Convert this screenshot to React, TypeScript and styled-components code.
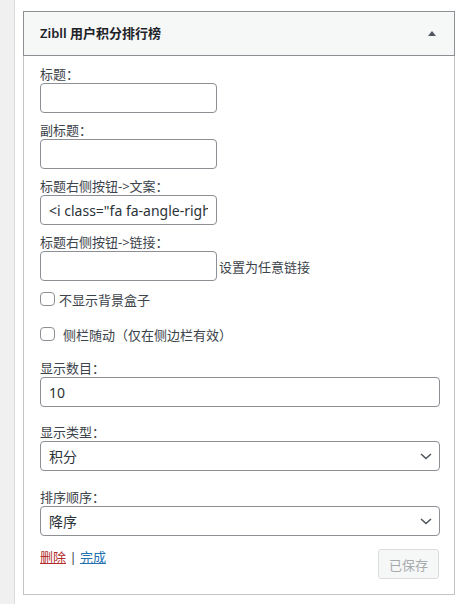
import React from 'react'
import styled, { createGlobalStyle } from 'styled-components'

const GlobalStyle = createGlobalStyle`
  html, body {
    margin: 0;
    padding: 0;
    background: #fff;
  }
  body {
    font-family: "Noto Sans", "Noto Sans CJK SC", sans-serif;
    font-size: 13px;
    color: #3c434a;
  }
  * { box-sizing: border-box; }
`

const Page = styled.div`
  display: flex;
  min-height: 604px;
  background: #f0f0f1;
  padding-left: 14px;
`

const Panel = styled.div`
  flex: 1;
  background: #fff;
  border-left: 1px solid #dcdcde;
  padding: 11px 4px 9px 8px;
`

const WidgetTop = styled.div`
  display: flex;
  align-items: center;
  justify-content: space-between;
  height: 45px;
  padding: 0 18px 0 16px;
  background: #f6f7f7;
  border: 1px solid #8c8f94;
`

const WidgetTitle = styled.h3`
  margin: 0;
  font-size: 13px;
  font-weight: 600;
  color: #1d2327;
  line-height: 1;
`

const WidgetInside = styled.div`
  display: flex;
  flex-direction: column;
  padding: 10px 14px 15px 16px;
  border: 1px solid #c3c4c7;
  border-top: none;
`

const Field = styled.div<{ $gap: number }>`
  display: flex;
  flex-direction: column;
  margin-bottom: ${p => p.$gap}px;
`

const Label = styled.label`
  display: block;
  font-size: 13px;
  line-height: 17px;
  color: #3c434a;
`

const Row = styled.div`
  display: flex;
  align-items: center;
`

const TextInput = styled.input<{ $wide?: boolean }>`
  width: ${p => (p.$wide ? '400px' : '177px')};
  height: 30px;
  padding: 0 8px;
  margin: 0;
  border: 1px solid #8c8f94;
  border-radius: 4px;
  background: #fff;
  font-family: "Noto Sans", "Noto Sans CJK SC", sans-serif;
  font-size: 14px;
  color: #2c3338;
  outline: none;
`

const Hint = styled.span`
  margin-left: 2px;
  font-size: 13px;
  color: #3c434a;
`

const CheckRow = styled.label<{ $top: number; $textGap: number }>`
  display: flex;
  align-items: center;
  height: 20px;
  margin-top: ${p => p.$top}px;
  gap: ${p => p.$textGap}px;
  font-size: 13px;
  color: #3c434a;
`

const Check = styled.input`
  appearance: none;
  width: 15px;
  height: 14px;
  margin: 0;
  border: 1px solid #8c8f94;
  border-radius: 4px;
  background: #fff;
`

const SelectWrap = styled.div`
  position: relative;
  width: 400px;
`

const Select = styled.select`
  appearance: none;
  width: 100%;
  height: 30px;
  padding: 0 24px 0 8px;
  margin: 0;
  border: 1px solid #8c8f94;
  border-radius: 4px;
  background: #fff;
  font-family: "Noto Sans", "Noto Sans CJK SC", sans-serif;
  font-size: 14px;
  color: #2c3338;
  outline: none;
`

const Chevron = styled.svg`
  position: absolute;
  right: 8px;
  top: 12px;
  pointer-events: none;
`

const Actions = styled.div`
  display: flex;
  justify-content: space-between;
  align-items: flex-start;
  margin-top: 13px;
`

const Links = styled.div`
  font-size: 13px;
  line-height: 17px;
  color: #3c434a;
`

const ActionLink = styled.a<{ $danger?: boolean }>`
  color: ${p => (p.$danger ? '#b32d2e' : '#2271b1')};
  text-decoration: underline;
  cursor: pointer;
`

const SaveButton = styled.button`
  height: 30px;
  padding: 0 10px;
  margin-right: 1px;
  border: 1px solid #dcdcde;
  border-radius: 3px;
  background: #f6f7f7;
  color: #a7aaad;
  font-family: "Noto Sans", "Noto Sans CJK SC", sans-serif;
  font-size: 13px;
`

function SelectBox(props: { value: string; options: string[] }) {
  return (
    <SelectWrap>
      <Select defaultValue={props.value}>
        {props.options.map(o => (
          <option key={o}>{o}</option>
        ))}
      </Select>
      <Chevron width="12" height="7" viewBox="0 0 12 7">
        <path d="M1 1l5 4.5L11 1" fill="none" stroke="#50575e" strokeWidth="1.6" />
      </Chevron>
    </SelectWrap>
  )
}

export default function App() {
  return (
    <>
      <GlobalStyle />
      <Page>
        <Panel>
          <WidgetTop>
            <WidgetTitle>Zibll 用户积分排行榜</WidgetTitle>
            <svg width="8" height="5" viewBox="0 0 8 5">
              <polygon points="4,0 8,5 0,5" fill="#50575e" />
            </svg>
          </WidgetTop>
          <WidgetInside>
            <Field $gap={9}>
              <Label>标题：</Label>
              <TextInput />
            </Field>
            <Field $gap={9}>
              <Label>副标题：</Label>
              <TextInput />
            </Field>
            <Field $gap={9}>
              <Label>标题右侧按钮-&gt;文案：</Label>
              <TextInput defaultValue={'<i class="fa fa-angle-right"></i>'} />
            </Field>
            <Field $gap={0}>
              <Label>标题右侧按钮-&gt;链接：</Label>
              <Row>
                <TextInput />
                <Hint>设置为任意链接</Hint>
              </Row>
            </Field>
            <CheckRow $top={8} $textGap={4}>
              <Check type="checkbox" />
              不显示背景盒子
            </CheckRow>
            <CheckRow $top={15} $textGap={8}>
              <Check type="checkbox" />
              侧栏随动（仅在侧边栏有效）
            </CheckRow>
            <Field $gap={17} style={{ marginTop: 16 }}>
              <Label>显示数目：</Label>
              <TextInput $wide defaultValue="10" />
            </Field>
            <Field $gap={18}>
              <Label>显示类型：</Label>
              <SelectBox value="积分" options={['积分', '等级', '经验']} />
            </Field>
            <Field $gap={0}>
              <Label>排序顺序：</Label>
              <SelectBox value="降序" options={['降序', '升序']} />
            </Field>
            <Actions>
              <Links>
                <ActionLink $danger>删除</ActionLink> | <ActionLink>完成</ActionLink>
              </Links>
              <SaveButton disabled>已保存</SaveButton>
            </Actions>
          </WidgetInside>
        </Panel>
      </Page>
    </>
  )
}
